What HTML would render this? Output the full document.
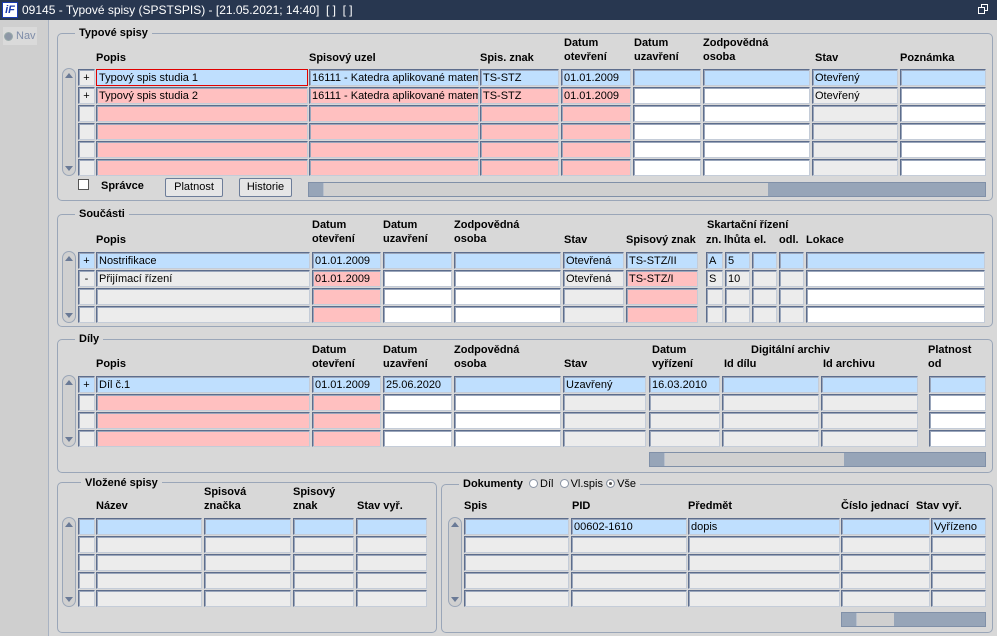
<!DOCTYPE html>
<html><head><meta charset="utf-8">
<style>
*{margin:0;padding:0;box-sizing:border-box}
body{width:997px;height:636px;overflow:hidden;background:#d8d8d8;font-family:"Liberation Sans",Arial,sans-serif;font-size:11px;color:#000;position:relative}
.a{position:absolute}
.tb{left:0;top:0;width:997px;height:20px;background:#283750;color:#fff;font-size:12px;line-height:20px;padding-left:22px}
.nav{left:0;top:20px;width:49px;height:616px;background:#cfcfcf;border-right:1px solid #a8b2c2}
.fr{position:absolute;border:1px solid #9aa6b8;border-radius:5px}
.ft{position:absolute;background:#d8d8d8;font-weight:bold;font-size:11px;padding:0 4px;line-height:13px}
.h{position:absolute;font-weight:bold;font-size:11px;line-height:14px;white-space:nowrap}
.f{position:absolute;height:17px;border:1px solid;border-color:#5d6d8c #c4ccd8 #c4ccd8 #5d6d8c;box-shadow:inset 1px 1px 0 #9aa6bb;background:#ececec;font-size:11px;line-height:16px;padding-left:2px;white-space:nowrap;overflow:hidden}
.b{background:#bfdffe}.p{background:#ffc0c0}.w{background:#fff}
.vs{position:absolute;width:14px;border:1px solid #9aa6b8;border-radius:7px;background:#d0d0d0}
.vs:before{content:"";position:absolute;left:2px;top:4px;border:4px solid transparent;border-bottom:5px solid #6a7a96;border-top:0}
.vs:after{content:"";position:absolute;left:2px;bottom:4px;border:4px solid transparent;border-top:5px solid #6a7a96;border-bottom:0}
.hs{position:absolute;height:15px;background:#97a5b8;border:1px solid #8090a8}
.th{position:absolute;top:0;height:13px;background:#d0d0d0;border-left:1px solid #b8c0cc}
.btn{position:absolute;height:19px;border:1px solid #6d7d99;border-radius:2px;background:#e6e6e6;text-align:center;line-height:17px;font-size:11px}
.rd{display:inline-block;width:9px;height:9px;border-radius:50%;border:1px solid #8a94a4;background:#fff;vertical-align:-1px;margin-right:2px}
</style></head><body>
<div class="a tb">09145 - Typové spisy (SPSTSPIS) - [21.05.2021; 14:40]&nbsp; [ ]&nbsp; [ ]</div>
<div class="a" style="left:2px;top:2px;width:16px;height:16px;background:#fff;border:1px solid #1a3ab0;color:#1a3ab0;font-weight:bold;font-style:italic;font-size:11px;line-height:14px;text-align:center">iF</div>
<div class="a" style="left:981px;top:4px;width:7px;height:7px;border:1px solid #fff"></div>
<div class="a" style="left:978px;top:7px;width:7px;height:7px;border:1px solid #fff;background:#283750"></div>
<div class="a nav"></div>
<div class="a" style="left:3px;top:27px;width:34px;height:18px;background:#dadada"></div>
<div class="a" style="left:4px;top:32px;width:9px;height:9px;border-radius:50%;border:1px solid #9aa;background:#8d97a6"></div>
<div class="a" style="left:16px;top:30px;color:#7e8ca8;font-size:11px">Nav</div>

<!-- Section 1 -->
<div class="fr" style="left:57px;top:33px;width:936px;height:168px"></div>
<div class="ft" style="left:75px;top:27px">Typové spisy</div>
<div class="h" style="left:96px;top:51px">Popis</div>
<div class="h" style="left:309px;top:51px">Spisový uzel</div>
<div class="h" style="left:480px;top:51px">Spis. znak</div>
<div class="h" style="left:564px;top:36px">Datum<br>otevření</div>
<div class="h" style="left:634px;top:36px">Datum<br>uzavření</div>
<div class="h" style="left:703px;top:36px">Zodpovědná<br>osoba</div>
<div class="h" style="left:815px;top:51px">Stav</div>
<div class="h" style="left:900px;top:51px">Poznámka</div>
<div class="vs" style="left:62px;top:68px;height:108px"></div>
<div class="f" style="left:78px;top:69px;width:17px;text-align:center;padding:0">+</div>
<div class="f b" style="left:96px;top:69px;width:212px;border:1px solid #e00000;box-shadow:none">Typový spis studia 1</div>
<div class="f b" style="left:309px;top:69px;width:170px">16111 - Katedra aplikované matem</div>
<div class="f b" style="left:480px;top:69px;width:79px">TS-STZ</div>
<div class="f b" style="left:561px;top:69px;width:70px">01.01.2009</div>
<div class="f b" style="left:633px;top:69px;width:68px"></div>
<div class="f b" style="left:703px;top:69px;width:107px"></div>
<div class="f b" style="left:812px;top:69px;width:86px">Otevřený</div>
<div class="f b" style="left:900px;top:69px;width:86px"></div>

<div class="f" style="left:78px;top:87px;width:17px;text-align:center;padding:0">+</div>
<div class="f p" style="left:96px;top:87px;width:212px">Typový spis studia 2</div>
<div class="f p" style="left:309px;top:87px;width:170px">16111 - Katedra aplikované matem</div>
<div class="f p" style="left:480px;top:87px;width:79px">TS-STZ</div>
<div class="f p" style="left:561px;top:87px;width:70px">01.01.2009</div>
<div class="f w" style="left:633px;top:87px;width:68px"></div>
<div class="f w" style="left:703px;top:87px;width:107px"></div>
<div class="f" style="left:812px;top:87px;width:86px">Otevřený</div>
<div class="f w" style="left:900px;top:87px;width:86px"></div>

<div class="f" style="left:78px;top:105px;width:17px"></div><div class="f p" style="left:96px;top:105px;width:212px"></div><div class="f p" style="left:309px;top:105px;width:170px"></div><div class="f p" style="left:480px;top:105px;width:79px"></div><div class="f p" style="left:561px;top:105px;width:70px"></div><div class="f w" style="left:633px;top:105px;width:68px"></div><div class="f w" style="left:703px;top:105px;width:107px"></div><div class="f" style="left:812px;top:105px;width:86px"></div><div class="f w" style="left:900px;top:105px;width:86px"></div>
<div class="f" style="left:78px;top:123px;width:17px"></div><div class="f p" style="left:96px;top:123px;width:212px"></div><div class="f p" style="left:309px;top:123px;width:170px"></div><div class="f p" style="left:480px;top:123px;width:79px"></div><div class="f p" style="left:561px;top:123px;width:70px"></div><div class="f w" style="left:633px;top:123px;width:68px"></div><div class="f w" style="left:703px;top:123px;width:107px"></div><div class="f" style="left:812px;top:123px;width:86px"></div><div class="f w" style="left:900px;top:123px;width:86px"></div>
<div class="f" style="left:78px;top:141px;width:17px"></div><div class="f p" style="left:96px;top:141px;width:212px"></div><div class="f p" style="left:309px;top:141px;width:170px"></div><div class="f p" style="left:480px;top:141px;width:79px"></div><div class="f p" style="left:561px;top:141px;width:70px"></div><div class="f w" style="left:633px;top:141px;width:68px"></div><div class="f w" style="left:703px;top:141px;width:107px"></div><div class="f" style="left:812px;top:141px;width:86px"></div><div class="f w" style="left:900px;top:141px;width:86px"></div>
<div class="f" style="left:78px;top:159px;width:17px"></div><div class="f p" style="left:96px;top:159px;width:212px"></div><div class="f p" style="left:309px;top:159px;width:170px"></div><div class="f p" style="left:480px;top:159px;width:79px"></div><div class="f p" style="left:561px;top:159px;width:70px"></div><div class="f w" style="left:633px;top:159px;width:68px"></div><div class="f w" style="left:703px;top:159px;width:107px"></div><div class="f" style="left:812px;top:159px;width:86px"></div><div class="f w" style="left:900px;top:159px;width:86px"></div>

<div class="a" style="left:78px;top:179px;width:11px;height:11px;background:#fff;border:1px solid #555"></div>
<div class="h" style="left:101px;top:179px">Správce</div>
<div class="btn" style="left:165px;top:178px;width:58px">Platnost</div>
<div class="btn" style="left:239px;top:178px;width:53px">Historie</div>
<div class="hs" style="left:308px;top:182px;width:678px"><div class="th" style="left:14px;width:445px"></div></div>

<!-- Section 2 -->
<div class="fr" style="left:57px;top:214px;width:936px;height:113px"></div>
<div class="ft" style="left:75px;top:208px">Součásti</div>
<div class="h" style="left:96px;top:233px">Popis</div>
<div class="h" style="left:312px;top:218px">Datum<br>otevření</div>
<div class="h" style="left:383px;top:218px">Datum<br>uzavření</div>
<div class="h" style="left:454px;top:218px">Zodpovědná<br>osoba</div>
<div class="h" style="left:564px;top:233px">Stav</div>
<div class="h" style="left:626px;top:233px">Spisový znak</div>
<div class="h" style="left:707px;top:218px">Skartační řízení</div>
<div class="h" style="left:706px;top:233px">zn.</div><div class="h" style="left:724px;top:233px">lhůta</div><div class="h" style="left:754px;top:233px">el.</div><div class="h" style="left:779px;top:233px">odl.</div><div class="h" style="left:806px;top:233px">Lokace</div>
<div class="vs" style="left:62px;top:251px;height:72px"></div>

<div class="f b" style="left:78px;top:252px;width:17px;text-align:center;padding:0">+</div><div class="f b" style="left:96px;top:252px;width:214px">Nostrifikace</div><div class="f b" style="left:312px;top:252px;width:69px">01.01.2009</div><div class="f b" style="left:383px;top:252px;width:69px"></div><div class="f b" style="left:454px;top:252px;width:107px"></div><div class="f b" style="left:563px;top:252px;width:61px">Otevřená</div><div class="f b" style="left:626px;top:252px;width:72px">TS-STZ/II</div><div class="f b" style="left:706px;top:252px;width:17px">A</div><div class="f b" style="left:725px;top:252px;width:25px">5</div><div class="f b" style="left:752px;top:252px;width:25px"></div><div class="f b" style="left:779px;top:252px;width:25px"></div><div class="f b" style="left:806px;top:252px;width:179px"></div>
<div class="f" style="left:78px;top:270px;width:17px;text-align:center;padding:0">-</div><div class="f" style="left:96px;top:270px;width:214px">Přijímací řízení</div><div class="f p" style="left:312px;top:270px;width:69px">01.01.2009</div><div class="f w" style="left:383px;top:270px;width:69px"></div><div class="f w" style="left:454px;top:270px;width:107px"></div><div class="f" style="left:563px;top:270px;width:61px">Otevřená</div><div class="f p" style="left:626px;top:270px;width:72px">TS-STZ/I</div><div class="f" style="left:706px;top:270px;width:17px">S</div><div class="f" style="left:725px;top:270px;width:25px">10</div><div class="f" style="left:752px;top:270px;width:25px"></div><div class="f" style="left:779px;top:270px;width:25px"></div><div class="f w" style="left:806px;top:270px;width:179px"></div>
<div class="f" style="left:78px;top:288px;width:17px"></div><div class="f" style="left:96px;top:288px;width:214px"></div><div class="f p" style="left:312px;top:288px;width:69px"></div><div class="f w" style="left:383px;top:288px;width:69px"></div><div class="f w" style="left:454px;top:288px;width:107px"></div><div class="f" style="left:563px;top:288px;width:61px"></div><div class="f p" style="left:626px;top:288px;width:72px"></div><div class="f" style="left:706px;top:288px;width:17px"></div><div class="f" style="left:725px;top:288px;width:25px"></div><div class="f" style="left:752px;top:288px;width:25px"></div><div class="f" style="left:779px;top:288px;width:25px"></div><div class="f w" style="left:806px;top:288px;width:179px"></div>
<div class="f" style="left:78px;top:306px;width:17px"></div><div class="f" style="left:96px;top:306px;width:214px"></div><div class="f p" style="left:312px;top:306px;width:69px"></div><div class="f w" style="left:383px;top:306px;width:69px"></div><div class="f w" style="left:454px;top:306px;width:107px"></div><div class="f" style="left:563px;top:306px;width:61px"></div><div class="f p" style="left:626px;top:306px;width:72px"></div><div class="f" style="left:706px;top:306px;width:17px"></div><div class="f" style="left:725px;top:306px;width:25px"></div><div class="f" style="left:752px;top:306px;width:25px"></div><div class="f" style="left:779px;top:306px;width:25px"></div><div class="f w" style="left:806px;top:306px;width:179px"></div>

<!-- Section 3 -->
<div class="fr" style="left:57px;top:339px;width:936px;height:134px"></div>
<div class="ft" style="left:75px;top:333px">Díly</div>
<div class="h" style="left:96px;top:357px">Popis</div>
<div class="h" style="left:312px;top:343px">Datum<br>otevření</div>
<div class="h" style="left:383px;top:343px">Datum<br>uzavření</div>
<div class="h" style="left:454px;top:343px">Zodpovědná<br>osoba</div>
<div class="h" style="left:564px;top:357px">Stav</div>
<div class="h" style="left:652px;top:343px">Datum<br>vyřízení</div>
<div class="h" style="left:751px;top:343px">Digitální archiv</div>
<div class="h" style="left:724px;top:357px">Id dílu</div>
<div class="h" style="left:823px;top:357px">Id archivu</div>
<div class="h" style="left:928px;top:343px">Platnost<br>od</div>
<div class="vs" style="left:62px;top:375px;height:72px"></div>
<div class="f b" style="left:78px;top:376px;width:17px;text-align:center;padding:0">+</div><div class="f b" style="left:96px;top:376px;width:214px">Díl č.1</div><div class="f b" style="left:312px;top:376px;width:69px">01.01.2009</div><div class="f b" style="left:383px;top:376px;width:69px">25.06.2020</div><div class="f b" style="left:454px;top:376px;width:107px"></div><div class="f b" style="left:563px;top:376px;width:83px">Uzavřený</div><div class="f b" style="left:649px;top:376px;width:71px">16.03.2010</div><div class="f b" style="left:722px;top:376px;width:97px"></div><div class="f b" style="left:821px;top:376px;width:97px"></div><div class="f b" style="left:929px;top:376px;width:57px"></div>
<div class="f" style="left:78px;top:394px;width:17px"></div><div class="f p" style="left:96px;top:394px;width:214px"></div><div class="f p" style="left:312px;top:394px;width:69px"></div><div class="f w" style="left:383px;top:394px;width:69px"></div><div class="f w" style="left:454px;top:394px;width:107px"></div><div class="f" style="left:563px;top:394px;width:83px"></div><div class="f" style="left:649px;top:394px;width:71px"></div><div class="f" style="left:722px;top:394px;width:97px"></div><div class="f" style="left:821px;top:394px;width:97px"></div><div class="f w" style="left:929px;top:394px;width:57px"></div>
<div class="f" style="left:78px;top:412px;width:17px"></div><div class="f p" style="left:96px;top:412px;width:214px"></div><div class="f p" style="left:312px;top:412px;width:69px"></div><div class="f w" style="left:383px;top:412px;width:69px"></div><div class="f w" style="left:454px;top:412px;width:107px"></div><div class="f" style="left:563px;top:412px;width:83px"></div><div class="f" style="left:649px;top:412px;width:71px"></div><div class="f" style="left:722px;top:412px;width:97px"></div><div class="f" style="left:821px;top:412px;width:97px"></div><div class="f w" style="left:929px;top:412px;width:57px"></div>
<div class="f" style="left:78px;top:430px;width:17px"></div><div class="f p" style="left:96px;top:430px;width:214px"></div><div class="f p" style="left:312px;top:430px;width:69px"></div><div class="f w" style="left:383px;top:430px;width:69px"></div><div class="f w" style="left:454px;top:430px;width:107px"></div><div class="f" style="left:563px;top:430px;width:83px"></div><div class="f" style="left:649px;top:430px;width:71px"></div><div class="f" style="left:722px;top:430px;width:97px"></div><div class="f" style="left:821px;top:430px;width:97px"></div><div class="f w" style="left:929px;top:430px;width:57px"></div>
<div class="hs" style="left:649px;top:452px;width:337px"><div class="th" style="left:14px;width:180px"></div></div>

<!-- Section 4 -->
<div class="fr" style="left:57px;top:482px;width:380px;height:151px"></div>
<div class="ft" style="left:81px;top:477px">Vložené spisy</div>
<div class="h" style="left:96px;top:499px">Název</div>
<div class="h" style="left:204px;top:485px">Spisová<br>značka</div>
<div class="h" style="left:293px;top:485px">Spisový<br>znak</div>
<div class="h" style="left:357px;top:499px">Stav vyř.</div>
<div class="vs" style="left:62px;top:517px;height:90px"></div>
<div class="f b" style="left:78px;top:518px;width:17px"></div><div class="f b" style="left:96px;top:518px;width:106px"></div><div class="f b" style="left:204px;top:518px;width:87px"></div><div class="f b" style="left:293px;top:518px;width:61px"></div><div class="f b" style="left:356px;top:518px;width:71px"></div>
<div class="f" style="left:78px;top:536px;width:17px"></div><div class="f" style="left:96px;top:536px;width:106px"></div><div class="f" style="left:204px;top:536px;width:87px"></div><div class="f" style="left:293px;top:536px;width:61px"></div><div class="f" style="left:356px;top:536px;width:71px"></div>
<div class="f" style="left:78px;top:554px;width:17px"></div><div class="f" style="left:96px;top:554px;width:106px"></div><div class="f" style="left:204px;top:554px;width:87px"></div><div class="f" style="left:293px;top:554px;width:61px"></div><div class="f" style="left:356px;top:554px;width:71px"></div>
<div class="f" style="left:78px;top:572px;width:17px"></div><div class="f" style="left:96px;top:572px;width:106px"></div><div class="f" style="left:204px;top:572px;width:87px"></div><div class="f" style="left:293px;top:572px;width:61px"></div><div class="f" style="left:356px;top:572px;width:71px"></div>
<div class="f" style="left:78px;top:590px;width:17px"></div><div class="f" style="left:96px;top:590px;width:106px"></div><div class="f" style="left:204px;top:590px;width:87px"></div><div class="f" style="left:293px;top:590px;width:61px"></div><div class="f" style="left:356px;top:590px;width:71px"></div>

<!-- Section 5 -->
<div class="fr" style="left:441px;top:484px;width:552px;height:149px"></div>
<div class="ft" style="left:459px;top:478px;font-weight:normal"><b>Dokumenty</b>&nbsp; <span class="rd"></span>Díl&nbsp; <span class="rd"></span>Vl.spis <span class="rd" style="background:#555;box-shadow:inset 0 0 0 2px #fff"></span>Vše</div>
<div class="h" style="left:464px;top:499px">Spis</div>
<div class="h" style="left:572px;top:499px">PID</div>
<div class="h" style="left:688px;top:499px">Předmět</div>
<div class="h" style="left:841px;top:499px">Číslo jednací</div>
<div class="h" style="left:916px;top:499px">Stav vyř.</div>
<div class="vs" style="left:448px;top:517px;height:90px"></div>
<div class="f b" style="left:464px;top:518px;width:105px"></div><div class="f b" style="left:571px;top:518px;width:116px">00602-1610</div><div class="f b" style="left:688px;top:518px;width:152px">dopis</div><div class="f b" style="left:841px;top:518px;width:89px"></div><div class="f b" style="left:931px;top:518px;width:55px">Vyřízeno</div>
<div class="f" style="left:464px;top:536px;width:105px"></div><div class="f" style="left:571px;top:536px;width:116px"></div><div class="f" style="left:688px;top:536px;width:152px"></div><div class="f" style="left:841px;top:536px;width:89px"></div><div class="f" style="left:931px;top:536px;width:55px"></div>
<div class="f" style="left:464px;top:554px;width:105px"></div><div class="f" style="left:571px;top:554px;width:116px"></div><div class="f" style="left:688px;top:554px;width:152px"></div><div class="f" style="left:841px;top:554px;width:89px"></div><div class="f" style="left:931px;top:554px;width:55px"></div>
<div class="f" style="left:464px;top:572px;width:105px"></div><div class="f" style="left:571px;top:572px;width:116px"></div><div class="f" style="left:688px;top:572px;width:152px"></div><div class="f" style="left:841px;top:572px;width:89px"></div><div class="f" style="left:931px;top:572px;width:55px"></div>
<div class="f" style="left:464px;top:590px;width:105px"></div><div class="f" style="left:571px;top:590px;width:116px"></div><div class="f" style="left:688px;top:590px;width:152px"></div><div class="f" style="left:841px;top:590px;width:89px"></div><div class="f" style="left:931px;top:590px;width:55px"></div>
<div class="hs" style="left:841px;top:612px;width:145px"><div class="th" style="left:14px;width:38px"></div></div>
</body></html>
